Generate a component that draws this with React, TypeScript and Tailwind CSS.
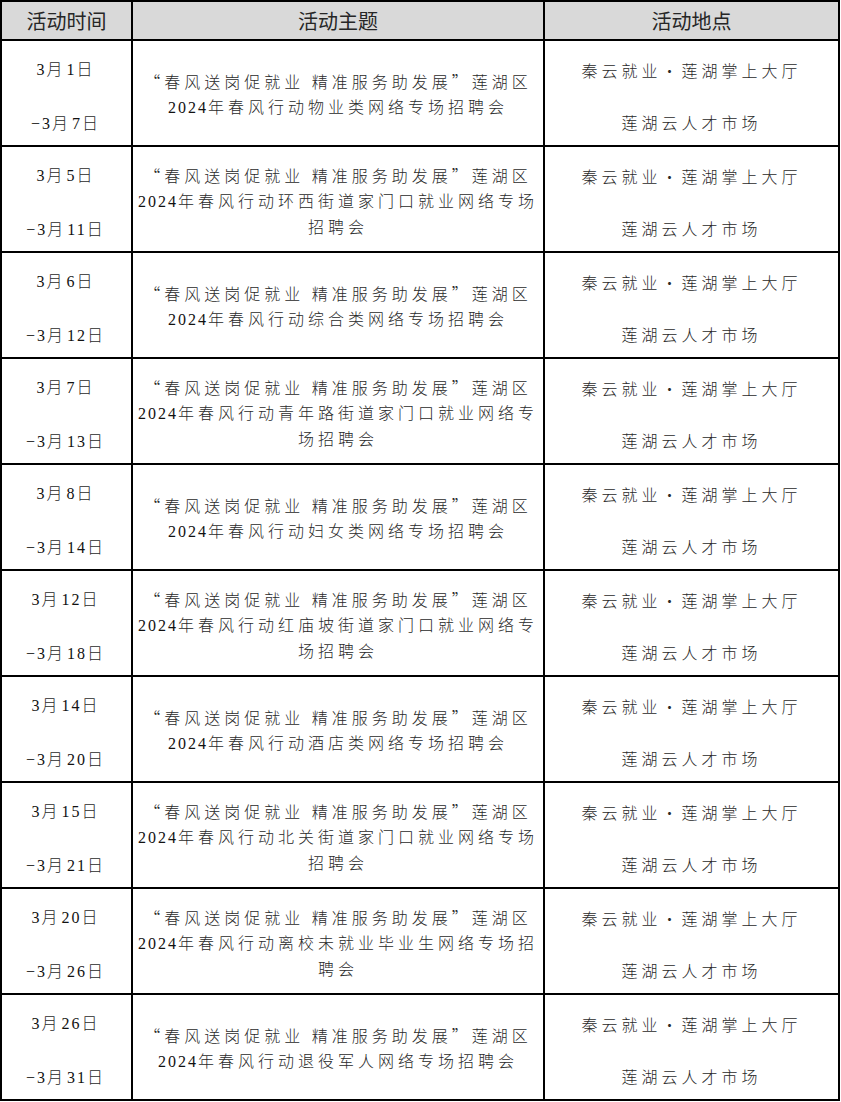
import React from "react"

const TITLE = "“春风送岗促就业 精准服务助发展”莲湖区"

const rows = [
  { from: "3月1日", to: "−3月7日", topic: [TITLE, "2024年春风行动物业类网络专场招聘会"] },
  { from: "3月5日", to: "−3月11日", topic: [TITLE, "2024年春风行动环西街道家门口就业网络专场", "招聘会"] },
  { from: "3月6日", to: "−3月12日", topic: [TITLE, "2024年春风行动综合类网络专场招聘会"] },
  { from: "3月7日", to: "−3月13日", topic: [TITLE, "2024年春风行动青年路街道家门口就业网络专", "场招聘会"] },
  { from: "3月8日", to: "−3月14日", topic: [TITLE, "2024年春风行动妇女类网络专场招聘会"] },
  { from: "3月12日", to: "−3月18日", topic: [TITLE, "2024年春风行动红庙坡街道家门口就业网络专", "场招聘会"] },
  { from: "3月14日", to: "−3月20日", topic: [TITLE, "2024年春风行动酒店类网络专场招聘会"] },
  { from: "3月15日", to: "−3月21日", topic: [TITLE, "2024年春风行动北关街道家门口就业网络专场", "招聘会"] },
  { from: "3月20日", to: "−3月26日", topic: [TITLE, "2024年春风行动离校未就业毕业生网络专场招", "聘会"] },
  { from: "3月26日", to: "−3月31日", topic: [TITLE, "2024年春风行动退役军人网络专场招聘会"] },
]

// digits get a serif face and tighter tracking, the rest is CJK
function Txt({ text }: { text: string }) {
  const parts = text.split(/([0-9−]+)/).filter(Boolean)
  return (
    <>
      {parts.map((p, i) =>
        /^[0-9−]+$/.test(p) ? (
          <span key={i} className="font-['Liberation_Serif',serif] font-normal tracking-[2px] text-[#111]">{p}</span>
        ) : (
          <span key={i} className="tracking-[4px]">{p}</span>
        )
      )}
    </>
  )
}

export default function App() {
  return (
    <div className="w-[840px] bg-white font-['Noto_Sans_CJK_SC',sans-serif]">
      <div className="grid grid-cols-[131px_412px_295px] border-t-2 border-l-2 border-black">
        {/* 表头 */}
        {["活动时间", "活动主题", "活动地点"].map((h) => (
          <div key={h} className="h-[39px] flex items-center justify-center bg-[#d9d9d9] border-r-2 border-b-2 border-black text-[20px] text-[#262626] leading-none">
            {h}
          </div>
        ))}

        {rows.map((r, i) => (
          <React.Fragment key={i}>
            <div className="h-[106px] flex flex-col items-center justify-center pt-[5px] border-r-2 border-b-2 border-black text-[16px] font-light leading-[26px] text-[#2a2a2a]">
              <div><Txt text={r.from} /></div>
              <div>&nbsp;</div>
              <div><Txt text={r.to} /></div>
            </div>
            <div className="h-[106px] flex flex-col items-center justify-center pt-[3px] border-r-2 border-b-2 border-black text-[16px] font-light leading-[25px] text-[#2a2a2a] whitespace-nowrap">
              {r.topic.map((t, j) => (
                <div key={j}><Txt text={t} /></div>
              ))}
            </div>
            <div className="h-[106px] flex flex-col items-center justify-center pt-[5px] border-r-2 border-b-2 border-black text-[16px] font-light leading-[26px] text-[#2a2a2a]">
              <div className="tracking-[4px]">秦云就业・莲湖掌上大厅</div>
              <div>&nbsp;</div>
              <div className="tracking-[4px]">莲湖云人才市场</div>
            </div>
          </React.Fragment>
        ))}
      </div>
    </div>
  )
}
